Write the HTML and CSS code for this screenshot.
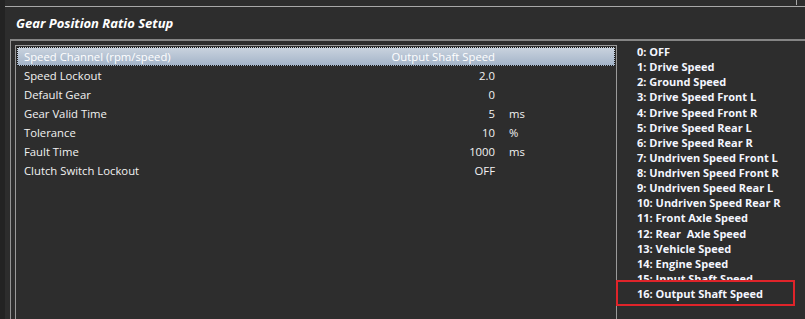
FILE: index.html
```html
<!DOCTYPE html>
<html>
<head>
<meta charset="utf-8">
<link rel="stylesheet" href="styles.css">
</head>
<body>
<div class="app">
  <div class="strip"></div>
  <div class="main">
    <div class="topline"><span class="tick"></span></div>
    <div class="titlebar"><h1 class="title">Gear Position Ratio Setup</h1></div>
    <div class="frame">
      <div class="listbox">
        <div class="row selected"><span class="label">Speed Channel (rpm/speed)</span><span class="value">Output Shaft Speed</span><span class="unit"></span></div>
        <div class="row"><span class="label">Speed Lockout</span><span class="value">2.0</span><span class="unit"></span></div>
        <div class="row"><span class="label">Default Gear</span><span class="value">0</span><span class="unit"></span></div>
        <div class="row"><span class="label">Gear Valid Time</span><span class="value">5</span><span class="unit">ms</span></div>
        <div class="row"><span class="label">Tolerance</span><span class="value">10</span><span class="unit">%</span></div>
        <div class="row"><span class="label">Fault Time</span><span class="value">1000</span><span class="unit">ms</span></div>
        <div class="row"><span class="label">Clutch Switch Lockout</span><span class="value">OFF</span><span class="unit"></span></div>
      </div>
      <ul class="options">
        <li>0: OFF</li>
        <li>1: Drive Speed</li>
        <li>2: Ground Speed</li>
        <li>3: Drive Speed Front L</li>
        <li>4: Drive Speed Front R</li>
        <li>5: Drive Speed Rear L</li>
        <li>6: Drive Speed Rear R</li>
        <li>7: Undriven Speed Front L</li>
        <li>8: Undriven Speed Front R</li>
        <li>9: Undriven Speed Rear L</li>
        <li>10: Undriven Speed Rear R</li>
        <li>11: Front Axle Speed</li>
        <li>12: Rear &nbsp;Axle Speed</li>
        <li>13: Vehicle Speed</li>
        <li>14: Engine Speed</li>
        <li>15: Input Shaft Speed</li>
        <li class="hl"><span class="hltext">16: Output Shaft Speed</span></li>
      </ul>
    </div>
  </div>
</div>
</body>
</html>
```

FILE: styles.css
```css
html, body {
  margin: 0;
  padding: 0;
}
body {
  width: 805px;
  height: 319px;
  overflow: hidden;
  background: #2d2d2d;
  font-family: "Open Sans", "Noto Sans", sans-serif;
  color: #f2f2f2;
}
.app {
  display: flex;
  height: 319px;
}
.strip {
  width: 5px;
  background: #232323;
  flex: none;
}
.main {
  flex: 1;
  display: flex;
  flex-direction: column;
  min-width: 0;
}
.topline {
  height: 6px;
  border-bottom: 1px solid #a8a8a8;
  position: relative;
  flex: none;
}
.tick {
  position: absolute;
  left: 791px;
  top: 0;
  width: 1px;
  height: 5px;
  background: #a8a8a8;
}
.titlebar {
  height: 32px;
  display: flex;
  align-items: center;
  padding-left: 11px;
  flex: none;
}
.title {
  margin: 0;
  font-size: 13px;
  font-weight: 700;
  font-style: italic;
  color: #ffffff;
}
.frame {
  flex: 1;
  margin-left: 5px;
  border-top: 2px solid #858585;
  border-left: 1px solid #949494;
  display: flex;
  padding: 4px 0 0 4px;
  min-height: 0;
}
.listbox {
  width: 598px;
  border: 1px solid #9a9a9a;
  border-bottom: none;
  padding: 1px;
  flex: none;
}
.row {
  height: 19px;
  display: grid;
  grid-template-columns: 300px 157px 100px;
  column-gap: 14px;
  align-items: center;
  font-size: 11.3px;
  padding-left: 7px;
  box-sizing: border-box;
  white-space: nowrap;
}
.row.selected {
  background: linear-gradient(#cbd4df, #a2b3c8);
  outline: 1px dotted #1a1a1a;
  outline-offset: -1px;
  color: #ffffff;
}
.value {
  text-align: right;
}
.options {
  list-style: none;
  margin: -1px 0 0 0;
  padding: 0 0 0 20px;
  font-size: 11px;
  font-weight: 700;
  line-height: 15.125px;
  white-space: nowrap;
  color: #f4f6ff;
}
.hl {
  position: relative;
}
.hl::before {
  content: "";
  position: absolute;
  left: -21px;
  top: -6px;
  width: 175px;
  height: 22px;
  border: 2px solid #e0242a;
  background: #2d2d2d;
}
.hltext {
  position: relative;
}
```
